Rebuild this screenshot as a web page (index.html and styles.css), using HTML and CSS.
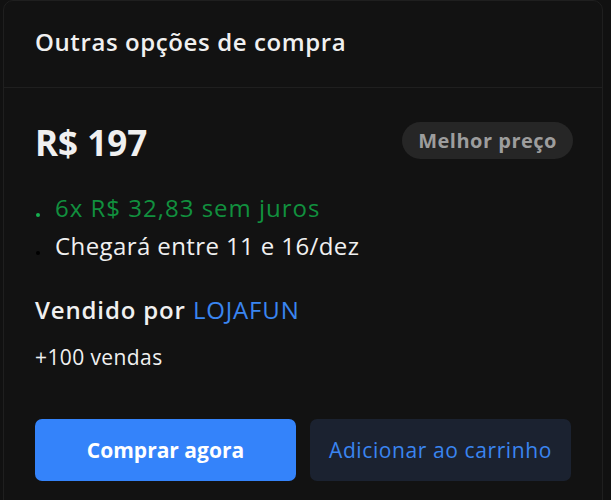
FILE: index.html
```html
<!DOCTYPE html>
<html lang="pt-BR">

<head>
  <meta charset="UTF-8">
  <meta name="viewport" content="width=device-width, initial-scale=1.0">
  <title>Outras opções de compra</title>
  <link rel="stylesheet" href="styles.css">
</head>

<body>
  <div class="card">
    <div class="card-header">Outras opções de compra</div>

    <div class="card-body">
      <div class="price-row">
        <div class="price">R$ 197</div>
        <span class="badge">Melhor preço</span>
      </div>

      <ul class="info-list">
        <li class="installments">6x R$ 32,83 sem juros</li>
        <li>Chegará entre 11 e 16/dez</li>
      </ul>

      <p class="seller">Vendido por <a href="#" class="seller-link">LOJAFUN</a></p>
      <p class="sales">+100 vendas</p>

      <div class="actions">
        <button class="btn btn-primary">Comprar agora</button>
        <button class="btn btn-secondary">Adicionar ao carrinho</button>
      </div>
    </div>
  </div>
</body>

</html>
```

FILE: styles.css
```css
body {
  margin: 0;
  background: #111111;
  font-family: 'Open Sans', 'Liberation Sans', sans-serif;
  color: #f0f0f0;
}

.card {
  width: 598px;
  margin-left: 3px;
  min-height: 520px;
  background: #121212;
  border: 1px solid #1f1f1f;
  border-radius: 10px;
}

.card-header {
  height: 87px;
  padding: 0 0 6px 31px;
  display: flex;
  align-items: center;
  font-size: 24px;
  font-weight: 600;
  letter-spacing: 0.6px;
  border-bottom: 1px solid #1f1f1f;
  box-sizing: border-box;
}

.card-body {
  padding: 35px 29px 0 31px;
}

.price-row {
  display: flex;
  justify-content: space-between;
  align-items: flex-start;
}

.price {
  font-size: 35px;
  line-height: 40px;
  font-weight: 700;
}

.badge {
  background: #262626;
  color: #9d9d9d;
  font-size: 20px;
  line-height: 27px;
  font-weight: 700;
  letter-spacing: 0.5px;
  padding: 5px 16px;
  border-radius: 20px;
  margin-top: -1px;
}

.info-list {
  list-style: none;
  margin: 26px 0 0;
  padding: 0;
}

.info-list li {
  position: relative;
  padding-left: 20px;
  font-size: 24px;
  font-weight: 500;
  letter-spacing: 0.4px;
  line-height: 38px;
}

.info-list li::before {
  content: '';
  position: absolute;
  left: 1px;
  top: 24px;
  width: 4px;
  height: 4px;
  border-radius: 50%;
  background: #000;
}

.info-list .installments {
  color: #11903e;
  font-weight: 400;
  letter-spacing: 1px;
}

.info-list .installments::before {
  background: #16b050;
}

.seller {
  margin: 28px 0 0;
  font-size: 24px;
  line-height: 33px;
  font-weight: 600;
  letter-spacing: 0.85px;
}

.seller-link {
  color: #3a85f0;
  font-weight: 400;
  text-decoration: none;
}

.sales {
  margin: 17px 0 0;
  font-size: 21px;
  line-height: 28px;
  letter-spacing: 0.4px;
}

.actions {
  display: grid;
  grid-template-columns: 1fr 1fr;
  gap: 14px;
  margin-top: 48px;
  width: 536px;
}

.btn {
  height: 62px;
  border: none;
  border-radius: 7px;
  font-family: inherit;
  font-size: 21px;
  cursor: pointer;
}

.btn-primary {
  background: #3483fa;
  color: #ffffff;
  font-weight: 700;
}

.btn-secondary {
  background: #1b2230;
  color: #3a85f0;
  font-weight: 500;
  letter-spacing: 0.6px;
}
```
